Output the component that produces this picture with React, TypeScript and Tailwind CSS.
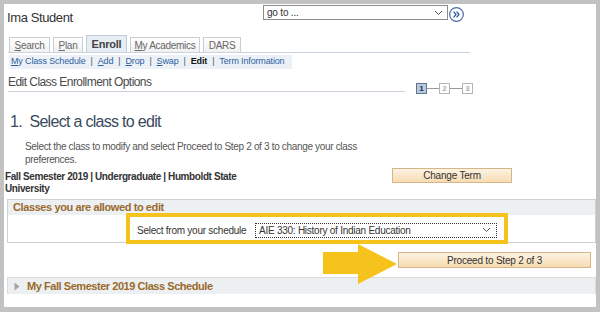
import React from "react";

const Chevron = () => (
  <svg width="9" height="6" viewBox="0 0 9 6" className="shrink-0">
    <path d="M1 1 L4.5 4.5 L8 1" fill="none" stroke="#555" strokeWidth="1" />
  </svg>
);

const GoIcon = () => (
  <svg width="15" height="15" viewBox="0 0 15 15" className="ml-[1px] mt-[3px]">
    <circle cx="7.5" cy="7.5" r="6.8" fill="#fff" stroke="#4a6ea8" strokeWidth="1.2" />
    <path d="M4.6 4.6 L7 7.5 L4.6 10.4 M7.6 4.6 L10 7.5 L7.6 10.4" fill="none" stroke="#2f5c9e" strokeWidth="1.3" />
  </svg>
);

const Tab = ({ first, rest, w, active }: { first: string; rest: string; w: string; active?: boolean }) =>
  active ? (
    <div className={`${w} h-[17px] flex items-center justify-center border border-b-0 border-[#c3cdd8] bg-[#e6edf4] text-[11px] font-bold text-[#444] tracking-[-0.2px]`}>
      {first}
      {rest}
    </div>
  ) : (
    <div className={`${w} h-[15px] flex items-center justify-center border border-b-0 border-[#c8ced6] bg-gradient-to-b from-white to-[#f1f1f1] text-[10px] text-[#666] tracking-[-0.3px]`}>
      <span className={first === "D" ? "" : "underline"}>{first}</span>
      {rest}
    </div>
  );

const Sep = () => <span className="px-[5px] text-[#555]">|</span>;

const Step = ({ n, on }: { n: string; on?: boolean }) => (
  <div
    className={`w-[11px] h-[11px] flex items-center justify-center text-[8px] font-bold ${
      on ? "bg-[#b9c8db] border border-[#5f7592] text-[#1d2f4a]" : "bg-white border border-[#b5b5b5] text-[#aaa]"
    }`}
  >
    {n}
  </div>
);

const Line = () => <div className="w-[12px] h-px bg-[#999]" />;

export default function App() {
  return (
    <div className="w-[600px] h-[312px] bg-[#c2c2c2] pt-[4px] pl-[4px] font-['Liberation_Sans',Arial,sans-serif]">
      <div className="w-[592px] h-[303px] bg-white overflow-hidden">
        {/* page header */}
        <div className="flex h-[30px]">
          <div className="w-[259px] pl-[3px] pt-[6px] text-[13px] leading-[16px] tracking-[-0.4px] text-[#333]">
            Ima Student
          </div>
          <div className="mt-[1px] flex h-[15px] w-[185px] items-center justify-between border border-[#8d8d8d] pl-[3px] pr-[4px] text-[10px] text-[#333] tracking-[-0.2px]">
            <span>go to ...</span>
            <Chevron />
          </div>
          <GoIcon />
        </div>

        {/* tabs */}
        <div className="ml-[4px] flex h-[19px] w-[462px] items-end gap-[3px] border-b border-[#c9d3de] pl-[1px]">
          <Tab first="S" rest="earch" w="w-[41px]" />
          <Tab first="P" rest="lan" w="w-[30px]" />
          <Tab first="E" rest="nroll" w="w-[41px]" active />
          <Tab first="M" rest="y Academics" w="w-[70px]" />
          <Tab first="D" rest="ARS" w="w-[38px]" />
        </div>

        {/* sub navigation */}
        <div className="ml-[5px] mt-[2px] flex h-[14px] w-[283px] items-center bg-[#ebf1f7] pl-[2px] text-[9px] tracking-[-0.15px] text-[#2f5f9e]">
          <span>
            <span className="underline">M</span>y Class Schedule
          </span>
          <Sep />
          <span>
            <span className="underline">A</span>dd
          </span>
          <Sep />
          <span>
            <span className="underline">D</span>rop
          </span>
          <Sep />
          <span>
            <span className="underline">S</span>wap
          </span>
          <Sep />
          <span className="font-bold text-[#111]">Edit</span>
          <Sep />
          <span>Term Information</span>
        </div>

        {/* page title + steps */}
        <div className="ml-[4px] mt-[5px] flex">
          <div className="h-[18px] w-[397px] border-b border-[#c8d0da] pt-[1px] text-[12px] leading-[14px] tracking-[-0.55px] text-[#4a4a4a]">
            Edit Class Enrollment Options
          </div>
          <div className="ml-[11px] mt-[9px] flex items-center">
            <Step n="1" on />
            <Line />
            <Step n="2" />
            <Line />
            <Step n="3" />
          </div>
        </div>

        <div className="ml-[6px] mt-[19px] text-[16px] leading-[18px] tracking-[-0.7px] text-[#394a5c]">
          1.&nbsp; Select a class to edit
        </div>

        <div className="ml-[21px] mt-[9px] w-[370px] text-[10px] leading-[13px] tracking-[-0.33px] text-[#555]">
          Select the class to modify and select Proceed to Step 2 of 3 to change your class
          <br />
          preferences.
        </div>

        <div className="mt-[2px] flex items-start">
          <div className="w-[388px] pl-[1px] pt-[3px] text-[10px] font-bold leading-[12px] tracking-[-0.4px] text-[#333]">
            Fall Semester 2019 | Undergraduate | Humboldt State
            <br />
            University
          </div>
          <div className="flex h-[15px] w-[120px] items-center justify-center border border-[#d4b689] bg-gradient-to-b from-[#fdf3e3] to-[#f7dcb2] text-[10px] tracking-[-0.2px] text-[#333]">
            Change Term
          </div>
        </div>

        {/* classes section */}
        <div className="relative ml-[3px] mt-[4px] w-[589px]">
          <div className="border-x border-b border-[#d0d0d0]">
            <div className="h-[16px] border-t border-[#d0d0d0] bg-[#edf0f2] pl-[5px] text-[11px] font-bold leading-[15px] tracking-[-0.4px] text-[#9a6a2c]">
              Classes you are allowed to edit
            </div>
            <div className="h-[29px]">
              <div className="ml-[118px] -mt-[2px] flex h-[31px] w-[382px] items-center border-[4px] border-[#f6c21c] pl-[7px] pr-[7px] pt-[3px]">
                <span className="text-[10px] tracking-[-0.25px] text-[#333]">Select from your schedule</span>
                <div className="ml-auto flex h-[15px] w-[242px] items-center justify-between border border-dotted border-[#333] bg-white pl-[3px] pr-[5px] text-[10px] tracking-[-0.25px] text-[#333]">
                  <span>AIE 330: History of Indian Education</span>
                  <Chevron />
                </div>
              </div>
            </div>
          </div>

          <div className="ml-[391px] mt-[9px] flex h-[16px] w-[193px] items-center justify-center border border-[#d4b689] bg-gradient-to-b from-[#fdf3e3] to-[#f7dcb2] text-[10px] tracking-[-0.2px] text-[#333]">
            Proceed to Step 2 of 3
          </div>

          <div className="mt-[9px] flex h-[17px] items-center border-x border-t border-[#dcdcdc] bg-[#edf0f2]">
            <svg width="6" height="9" viewBox="0 0 6 9" className="ml-[6px]">
              <path d="M0.5 0.5 L5.5 4.5 L0.5 8.5 Z" fill="#a3a3a3" />
            </svg>
            <span className="ml-[7px] text-[11px] font-bold tracking-[-0.45px] text-[#9a6a2c]">
              My Fall Semester 2019 Class Schedule
            </span>
          </div>

          {/* annotation arrow */}
          <svg width="76" height="42" viewBox="0 0 76 42" className="absolute left-[315px] top-[45px]">
            <polygon points="1,8 36,8 36,0 75,20 36,40 36,30 1,30" fill="#f6c21c" />
          </svg>
        </div>
      </div>
    </div>
  );
}
